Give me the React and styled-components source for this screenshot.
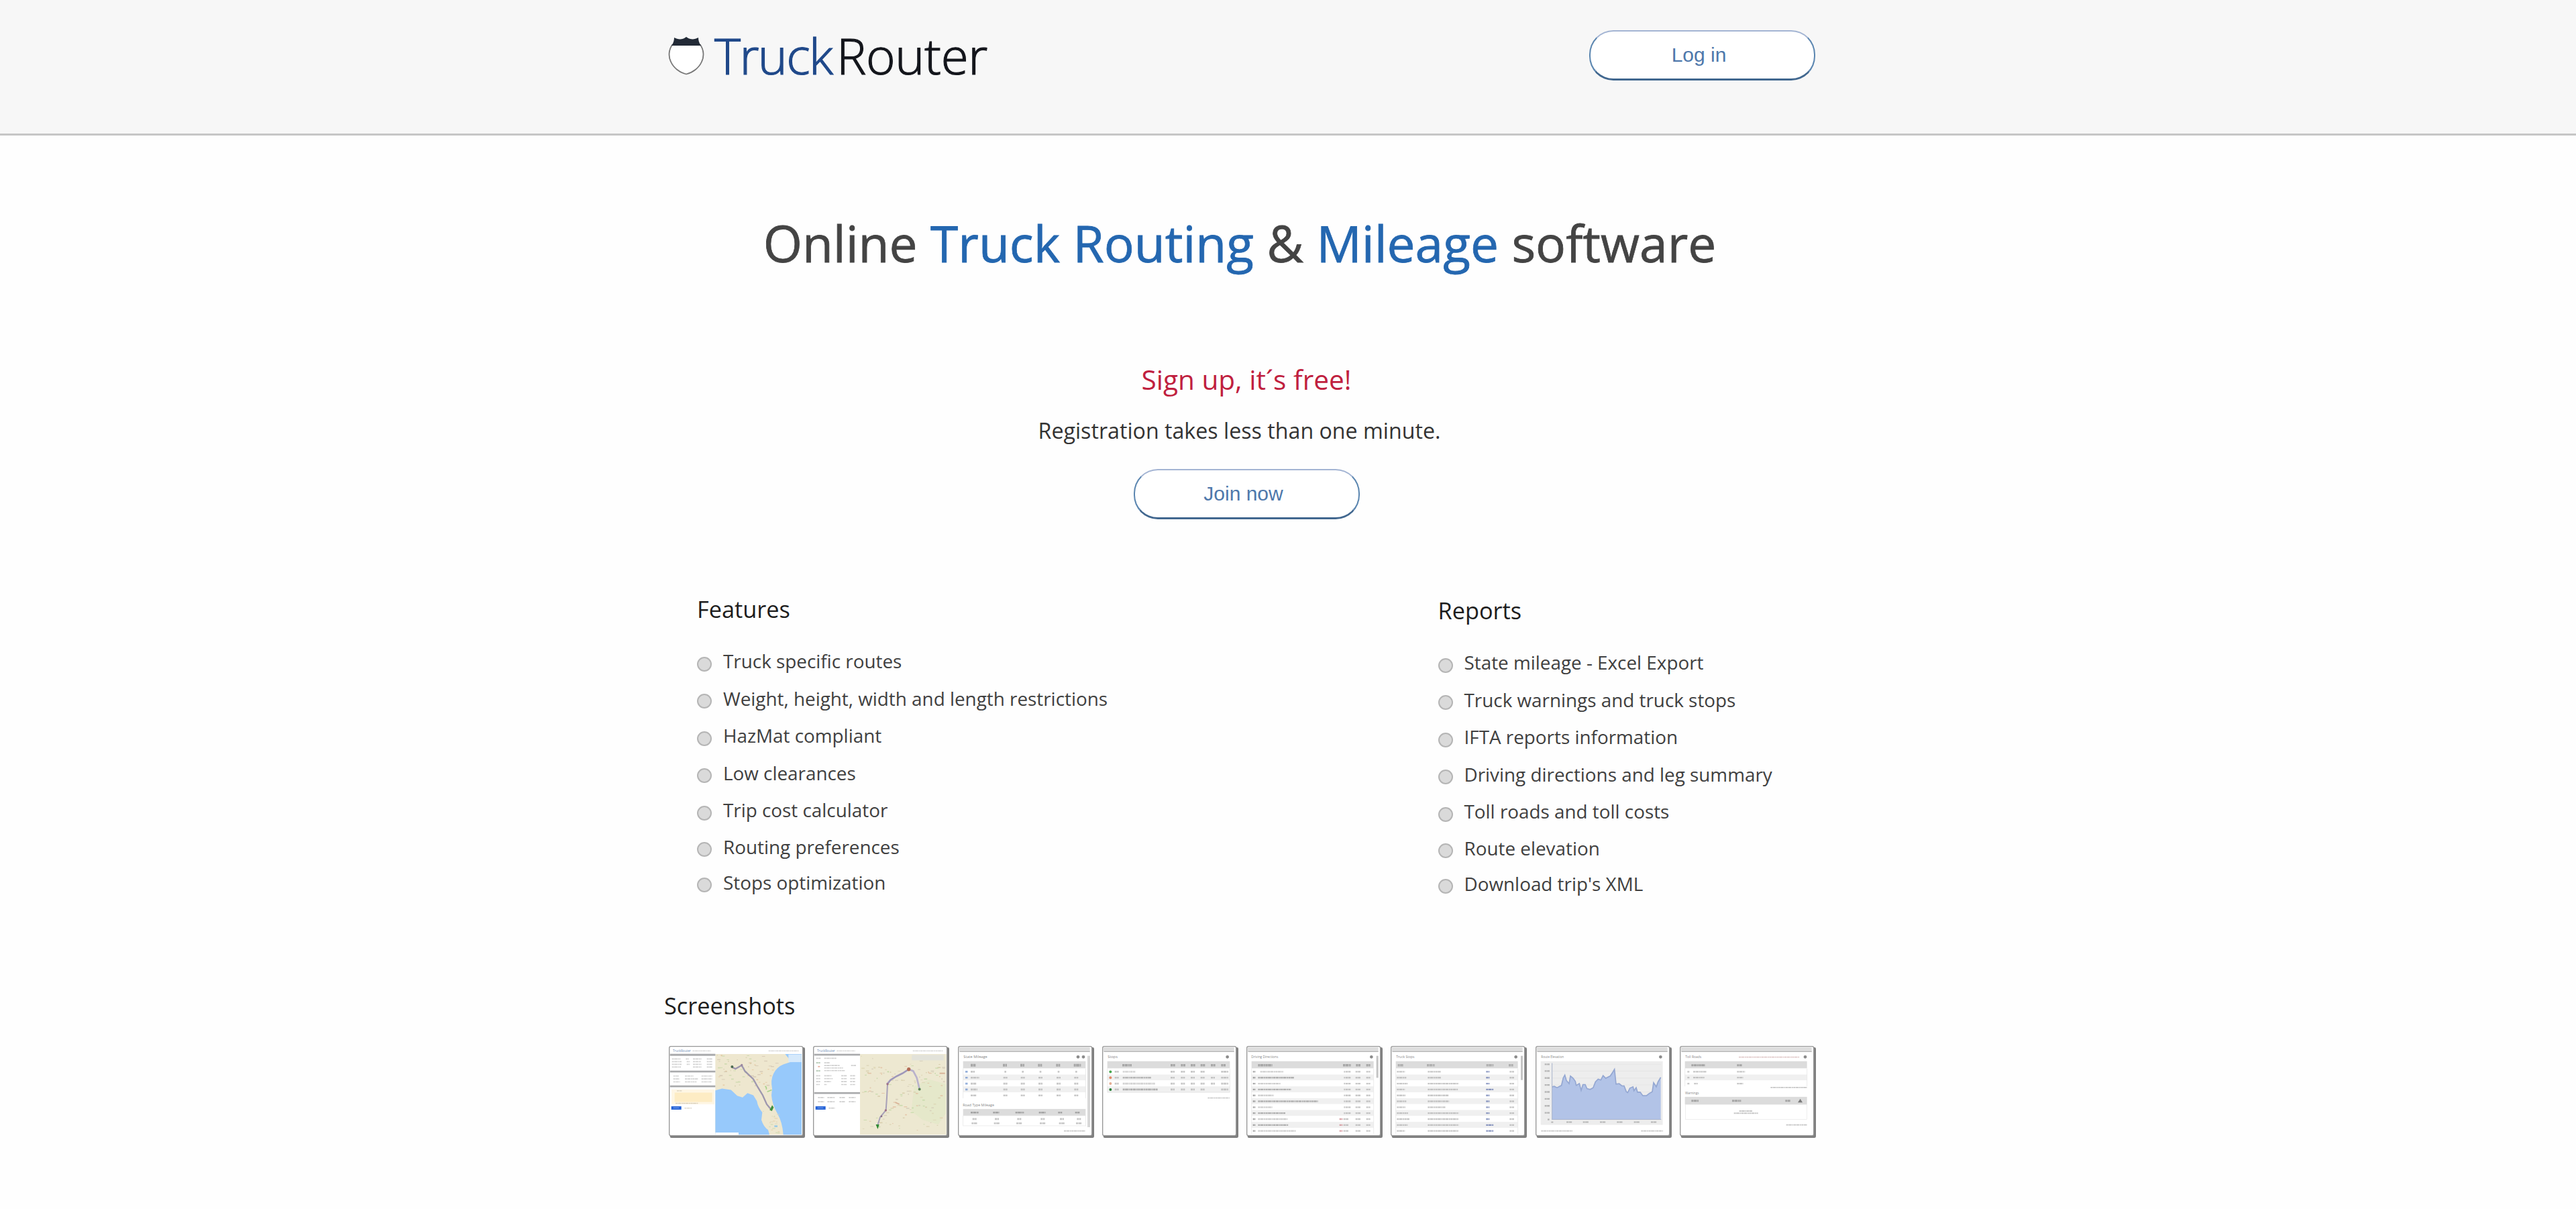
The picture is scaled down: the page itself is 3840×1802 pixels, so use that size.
import React from "react";
import styled, { createGlobalStyle } from "styled-components";

const Global = createGlobalStyle`
  html, body { margin: 0; padding: 0; background: #fefefe; }
  body { font-family: "Open Sans", "Noto Sans", sans-serif; color: #333; overflow-x: hidden; }
  *, *::before { box-sizing: border-box; }
`;

const Page = styled.div`
  min-height: 1802px;
  background: #fefefe;
`;

const Header = styled.header`
  height: 202px;
  background: #f7f7f7;
  border-bottom: 3px solid #c6c6c6;
  padding: 45px 1134px 0 996px;
  display: flex;
  justify-content: space-between;
  align-items: flex-start;
`;

const Brand = styled.a`
  display: flex;
  align-items: flex-start;
  gap: 15px;
`;

const Shield = styled.svg`
  width: 54px;
  height: 58px;
  margin-top: 9px;
`;

const BrandName = styled.span`
  font-family: "Open Sans", sans-serif;
  font-weight: 300;
  font-size: 74.5px;
  font-kerning: none;
  line-height: 80px;
  margin-top: -3px;
  white-space: nowrap;
  color: #14161c;
  -webkit-text-stroke: 1.2px currentColor;
  letter-spacing: -0.3px;
`;

const BrandAccent = styled.span`
  color: #20498a;
  margin-right: 6.5px;
  letter-spacing: -1.6px;
`;

const PillButton = styled.button`
  width: 337px;
  height: 75px;
  margin: 0;
  padding: 0 10px 0 0;
  border: 2px solid #5b86b0;
  border-top-color: #a3b4d3;
  border-bottom: 3px solid #41678f;
  border-radius: 36px;
  background: #fff;
  color: #4e78ab;
  font-family: "Liberation Sans", Arial, sans-serif;
  font-size: 30px;
  line-height: 34px;
`;

const Main = styled.main`
  width: 1716px;
  margin-left: 991px;
  display: flex;
  flex-direction: column;
`;

const Hero = styled.section`
  padding-top: 110px;
  display: flex;
  flex-direction: column;
  align-items: center;
`;

const Title = styled.h1`
  margin: 0 0 124px;
  padding-right: 2px;
  font-weight: 400;
  font-size: 74.9px;
  line-height: 100px;
  color: #444;
  white-space: nowrap;
  -webkit-text-stroke: 0.8px currentColor;
`;

const Accent = styled.span`
  color: #2467b0;
`;

const SignUp = styled.h2`
  margin: 0 0 21px;
  padding-left: 18px;
  font-weight: 400;
  font-size: 40.6px;
  line-height: 60px;
  color: #c01f3f;
`;

const Note = styled.p`
  margin: 0 0 32px;
  padding-right: 3px;
  font-size: 32.2px;
  line-height: 50px;
  color: #333;
`;

const JoinSlot = styled.div`
  padding-left: 19px;
  display: flex;
`;

const Columns = styled.section`
  margin-top: 109px;
  height: 480px;
  padding-left: 48px;
  display: grid;
  grid-template-columns: 1104.5px 1fr;
`;

const Column = styled.div`
  padding-top: ${(p) => p.$drop || 0}px;
`;

const Heading = styled.h3`
  margin: 0;
  font-weight: 400;
  font-size: 34.3px;
  line-height: 50px;
  color: #1d1d1d;
`;

const List = styled.ul`
  list-style: none;
  margin: 26px 0 0;
  padding: 0;
  display: grid;
  grid-template-rows: 55.6px 55.6px 55.6px 55.5px 54.4px 53px 53px;
`;

const Item = styled.li`
  display: flex;
  align-items: flex-start;
  gap: 17px;
  font-size: 27.85px;
  line-height: 53px;
  color: #404040;
  white-space: nowrap;

  &::before {
    content: "";
    flex: none;
    width: 22px;
    height: 22px;
    margin: 19.5px 0 0 0;
    border: 2px solid #b5b5b5;
    border-radius: 50%;
    background: #dadada;
  }
`;

const Gallery = styled.section`
  margin: 111px 0 0 -1px;
`;

const Strip = styled.div`
  margin: 35px 0 0 7px;
  display: flex;
  gap: 12.3px;
`;

const Frame = styled.svg`
  display: block;
  flex: none;
  width: 203px;
  height: 137px;
`;

const TinyText = styled.text`
  font-family: "Open Sans", sans-serif;
  font-size: ${(p) => p.$size || 17}px;
  fill: ${(p) => p.$fill || "#888"};
`;

/* A thumbnail drawn on a 609 x 410 canvas. */
function Thumb({ children, dialog }) {
  return (
    <Frame viewBox="0 0 609 410" preserveAspectRatio="none">
      <rect x="5" y="6" width="604" height="404" rx="7" fill="#7f7f7f" />
      <rect x="2" y="2" width="597" height="398" rx="7" fill="#fff" stroke="#979797" strokeWidth="4" />
      {dialog && <path d="M6 6H590V26H6Z" fill="#dedede" />}
      {dialog && <path d="M8 25H590" stroke="#b4b4b4" strokeWidth="4" />}
      {children}
    </Frame>
  );
}

/* Runs of unreadably small copy: [x, y, width, colour] */
function Lines({ data, h = 6, fill = "#aaa", opacity = 0.65 }) {
  return (
    <g opacity={opacity}>
      {data.map(([x, y, w, c], i) => (
        <path
          key={i}
          d={`M${x} ${y}h${w}`}
          stroke={c || fill}
          strokeWidth={h}
          strokeDasharray="9 1.5 14 2 6 1.5"
        />
      ))}
    </g>
  );
}

function Rows({ x, y, w, n, step = 26.4 }) {
  return (
    <g>
      {Array.from({ length: n }, (_, i) => (
        <rect key={i} x={x} y={y + i * step} width={w} height={step} fill={i % 2 ? "#f0f0f0" : "#fff"} />
      ))}
      <path d={`M${x} ${y}V${y + n * step}M${x + w} ${y}V${y + n * step}`} stroke="#e2e2e2" strokeWidth="2" />
    </g>
  );
}

function AppTop() {
  return (
    <g>
      <TinyText x="18" y="26" $size={14} $fill="#6f8cb6">TruckRouter</TinyText>
      <Lines data={[[106, 22, 82], [446, 22, 136]]} h={4} fill="#bbb" />
    </g>
  );
}

const speckle = (x, y, w, h, n, colors) =>
  Array.from({ length: n }, (_, i) => {
    const px = x + ((i * 137.5) % w);
    const py = y + ((i * 83.3 + i * i * 7.1) % h);
    return (
      <rect key={i} x={px} y={py} width={5 + (i % 4) * 3} height={3 + (i % 3)} fill={colors[i % colors.length]} opacity="0.7" />
    );
  });

function CoastMap() {
  return (
    <Thumb>
      <AppTop />
      <rect x="208" y="36" width="386" height="360" fill="#eee7cf" />
      {speckle(214, 40, 270, 140, 70, ["#cfc9a6", "#e2c298", "#c2d6a4", "#cfc1ae"])}
      <path d="M594 36H520L548 70L512 82Q482 94 468 124Q454 152 462 190L459 220Q462 262 486 302Q508 340 512 396H594Z" fill="#97c9fb" />
      <path d="M208 198L238 190L278 196L306 222L330 230L352 210L378 220L394 246Q398 272 418 296L414 330Q424 362 444 374L450 396H208Z" fill="#97c9fb" />
      {speckle(420, 290, 70, 100, 18, ["#d8d3b4", "#e6cda6", "#cfdcb4"])}
      <rect x="535" y="38" width="58" height="34" fill="#d6e9fb" />
      <path d="M208 386H312V398H208Z" fill="#fff" />
      <path d="M283 94L298 102L326 86L340 112L378 148L398 184L420 220L438 260L458 284" fill="none" stroke="#8f88a8" strokeWidth="7" opacity=".85" />
      <circle cx="283" cy="93" r="6" fill="#4b6a4f" />
      <circle cx="326" cy="85" r="5" fill="#9a87a0" />
      <path d="M462 264l7 10-8 16-10-4z" fill="#3f9141" />
      <path d="M430 180q8 2 6 14M440 204l20-8" stroke="#a9d18b" strokeWidth="5" fill="none" />
      <rect x="472" y="354" width="14" height="8" fill="#9ccbe4" />
      <rect x="5" y="35" width="203" height="9" fill="#a9aaac" />
      <rect x="5" y="110" width="203" height="8" fill="#a9aaac" />
      <rect x="5" y="176" width="203" height="8" fill="#a9aaac" />
      <Lines
        data={[
          [14, 58, 38], [76, 58, 14], [108, 58, 38], [170, 58, 24], [14, 70, 44], [80, 70, 14], [108, 70, 36], [170, 70, 24],
          [14, 82, 44], [80, 82, 14], [108, 82, 38], [170, 82, 24], [14, 94, 40], [108, 94, 38], [170, 94, 24],
          [20, 134, 26], [72, 134, 38], [146, 134, 48], [20, 147, 28], [72, 147, 58], [146, 147, 48], [20, 160, 30], [72, 160, 52], [146, 160, 46],
        ]}
        h={5}
        fill="#bcbcbc"
        opacity={0.65}
      />
      <rect x="12" y="194" width="192" height="66" fill="#fef6e4" />
      <path d="M26 208H194V250H26Z" fill="#fdecc4" />
      <Lines data={[[36, 200, 22], [30, 256, 100], [70, 277, 34]]} h={4} fill="#c4bba8" />
      <rect x="11" y="269" width="45" height="15" fill="#2462d6" />
      <rect x="20" y="274" width="26" height="4" fill="#6b97ea" />
    </Thumb>
  );
}

function InlandMap() {
  return (
    <Thumb>
      <AppTop />
      <rect x="210" y="36" width="386" height="360" fill="#ede8d1" />
      <path d="M452 180L520 150L594 170V300L560 350L490 330L440 290Z" fill="#dfe7c4" opacity=".6" />
      {speckle(214, 44, 370, 340, 130, ["#dcd3b0", "#dfb898", "#bcd6a0", "#cfc4b2", "#d0c4a0"])}
      <rect x="442" y="40" width="142" height="24" fill="#dfe0dc" opacity=".8" />
      <path d="M330 170L346 152L372 136L400 122L428 104L448 112L464 142L476 192" fill="none" stroke="#b9b2cc" strokeWidth="8" />
      <path d="M428 104L400 122L372 136L346 152L333 170L330 230L326 286L300 318L288 356" fill="none" stroke="#968fb2" strokeWidth="6" opacity=".8" />
      <circle cx="428" cy="104" r="8" fill="#b26b55" />
      <circle cx="333" cy="170" r="5" fill="#a06f84" />
      <circle cx="325" cy="287" r="5" fill="#a06f84" />
      <circle cx="306" cy="314" r="4" fill="#8a6f84" />
      <circle cx="476" cy="193" r="6" fill="#5c8257" />
      <path d="M283 352h11l-5 15z" fill="#2f8a34" stroke="#2f8a34" strokeWidth="3" />
      <path d="M368 252l18 8M566 122h24" stroke="#d1a083" strokeWidth="6" opacity=".7" />
      <rect x="5" y="35" width="205" height="8" fill="#a9aaac" />
      <rect x="5" y="206" width="205" height="8" fill="#a9aaac" />
      <Lines
        data={[
          [14, 55, 20], [50, 55, 54], [14, 75, 18, "#8fae90"], [50, 75, 24], [50, 87, 70], [170, 87, 22], [22, 92, 10, "#dd8a72"],
          [50, 98, 84], [50, 110, 92], [14, 111, 18, "#8fae90"], [14, 133, 18], [50, 133, 32], [126, 133, 26], [166, 133, 22],
          [14, 146, 18], [50, 146, 38], [126, 146, 26], [166, 146, 22], [14, 159, 18], [50, 159, 30], [126, 159, 26], [166, 159, 22], [14, 172, 16], [50, 172, 12], [126, 172, 26], [166, 172, 22],
          [22, 230, 28], [64, 230, 34], [118, 230, 26], [160, 230, 30], [22, 249, 28], [64, 249, 34], [118, 249, 26], [160, 249, 30], [70, 277, 28],
        ]}
        h={5}
        fill="#bcbcbc"
        opacity={0.7}
      />
      <rect x="11" y="269" width="45" height="15" fill="#2462d6" />
      <rect x="20" y="274" width="26" height="4" fill="#6b97ea" />
    </Thumb>
  );
}

function StateMileage() {
  const cols = [203, 281, 360, 441, 520];
  return (
    <Thumb dialog>
      <TinyText x="25" y="55">State Mileage</TinyText>
      <circle cx="537" cy="49" r="7" fill="#8b8b8b" />
      <circle cx="561" cy="49" r="7" fill="#8b8b8b" />
      <rect x="23" y="68" width="548" height="32" fill="#dcdcdc" />
      <Rows x={23} y={101} w={548} n={5} />
      <Lines data={[[57, 86, 22], ...cols.map((x) => [x - 2, 86, x > 500 ? 32 : 18])]} h={12} fill="#8c8c8c" />
      <Lines
        h={8}
        data={[0, 1, 2, 3, 4].flatMap((r) => [
          [57, 115 + r * 26.4, [18, 38, 26, 30, 26][r]],
          ...cols.map((x) => [r ? x : x + 5, 115 + r * 26.4, r ? 18 : 8]),
          ...(r < 4 ? [[33, 115 + r * 26.4, 12, "#5d86c9"]] : []),
        ])}
      />
      <TinyText x="22" y="269" $size={16}>Road Type Mileage</TinyText>
      <rect x="23" y="281" width="548" height="30" fill="#dcdcdc" />
      <rect x="23" y="311" width="548" height="45" fill="none" stroke="#e4e4e4" strokeWidth="2" />
      <Lines
        h={8}
        data={[57, 157, 257, 362, 448, 524].flatMap((x, i) => [
          [x, 297, [36, 28, 38, 30, 18, 20][i], "#858585"],
          [x + 8, 326, 18],
          [x + 4, 345, 26],
        ])}
      />
      <rect x="579" y="44" width="12" height="318" fill="#d8d8d8" />
      <Lines data={[[474, 379, 96]]} h={5} />
    </Thumb>
  );
}

function Stops() {
  const cols = [306, 352, 396, 440, 486, 532];
  return (
    <Thumb dialog>
      <TinyText x="25" y="55">Stops</TinyText>
      <circle cx="560" cy="49" r="7" fill="#8b8b8b" />
      <rect x="23" y="68" width="548" height="32" fill="#dcdcdc" />
      <Rows x={23} y={101} w={548} n={4} />
      <path d="M23 207H571" stroke="#ddd" strokeWidth="2" />
      <Lines data={[[90, 86, 42], ...cols.map((x) => [x, 86, 20])]} h={11} fill="#8c8c8c" />
      <Lines
        h={8}
        data={[0, 1, 2, 3].flatMap((r) => [
          [56, 115 + r * 26.4, 18],
          [92, 115 + r * 26.4, [56, 128, 144, 156][r], ["#c4c4c4", "#989898", "#bbb", "#8c8c8c"][r]],
          ...cols.filter((_, i) => i !== 4 || r === 1 || r === 2).map((x) => [x, 115 + r * 26.4, x > 520 ? 32 : 18]),
        ])}
      />
      {["#45a54b", "#e08a68", "#e4ac91", "#267d36"].map((c, i) => (
        <circle key={c} cx="37" cy={115 + i * 26.4} r="6" fill={c} />
      ))}
      <Lines data={[[472, 232, 98]]} h={5} />
    </Thumb>
  );
}

function Directions() {
  const widths = [104, 162, 100, 148, 70, 268, 64, 122, 132, 136, 170];
  return (
    <Thumb dialog>
      <TinyText x="22" y="55" $size={14.5}>Driving Directions</TinyText>
      <circle cx="559" cy="49" r="7" fill="#8b8b8b" />
      <rect x="23" y="68" width="546" height="32" fill="#dcdcdc" />
      <Rows x={23} y={101} w={546} n={11} />
      <Lines data={[[52, 86, 64], [432, 86, 36], [490, 86, 20], [536, 86, 18]]} h={11} fill="#8c8c8c" />
      <Lines
        h={7}
        data={widths.flatMap((w, r) => [
          [29, 115 + r * 26.4, 12, "#7b7b7b"],
          [r ? 52 : 62, 115 + r * 26.4, w, r % 2 ? "#8e8e8e" : "#b5b5b5"],
          [r > 7 ? 416 : 436, 115 + r * 26.4, r > 7 ? 14 : 6, r > 7 ? "#c9747c" : "#aaa"],
          [r > 7 ? 434 : 444, 115 + r * 26.4, 22],
          [488, 115 + r * 26.4, 22],
          [536, 115 + r * 26.4, 18],
        ])}
      />
      <rect x="581" y="44" width="9" height="98" fill="#c4c4c4" />
    </Thumb>
  );
}

function TruckStops() {
  const places = [58, 60, 138, 136, 94, 96, 80, 138, 138, 138, 138];
  const names = [36, 42, 48, 36, 38, 42, 38, 50, 56, 48, 36];
  return (
    <Thumb dialog>
      <TinyText x="25" y="55" $size={15}>Truck Stops</TinyText>
      <circle cx="560" cy="49" r="7" fill="#8b8b8b" />
      <rect x="23" y="68" width="546" height="32" fill="#dcdcdc" />
      <Rows x={23} y={101} w={546} n={11} />
      <Lines data={[[32, 86, 24], [162, 86, 36], [428, 86, 32], [528, 86, 20]]} h={11} fill="#999" />
      <Lines
        h={7}
        data={places.flatMap((w, r) => [
          [28, 115 + r * 26.4, names[r]],
          [166, 115 + r * 26.4, w],
          [427, 115 + r * 26.4, [3, 9, 10].includes(r) ? 34 : 15, "#5064a4"],
          [532, 115 + r * 26.4, 20],
        ])}
      />
      <rect x="582" y="44" width="9" height="108" fill="#c4c4c4" />
    </Thumb>
  );
}

function Elevation() {
  const ridge =
    "74,182 84,180 96,186 116,176 124,142 131,130 138,154 150,168 156,134 168,144 178,158 182,176 196,168 204,198 212,172 222,172 230,190 244,194 258,186 268,160 280,148 292,152 302,132 314,144 334,134 346,116 353,104 360,170 374,168 386,178 396,178 406,204 412,208 422,188 436,182 440,200 450,186 456,206 468,206 480,222 496,222 508,212 522,204 528,164 540,182 548,160 560,140";
  return (
    <Thumb dialog>
      <TinyText x="25" y="55" $size={14}>Route Elevation</TinyText>
      <circle cx="559" cy="49" r="7" fill="#8b8b8b" />
      <rect x="23" y="68" width="546" height="284" fill="#ededed" />
      {[82, 112, 143, 174, 205, 236, 267, 298].map((y) => (
        <path key={y} d={`M74 ${y}H560`} stroke="#e2e2e2" strokeWidth="2" />
      ))}
      <polygon points={`74,328 ${ridge} 560,328`} fill="#b2c3e7" />
      <polyline points={ridge} fill="none" stroke="#94a7d2" strokeWidth="5" />
      <path d="M74 76V328H562" fill="none" stroke="#aab4cc" strokeWidth="3" />
      <Lines h={7} data={[82, 112, 143, 174, 205, 236, 267, 298, 328].map((y) => [y === 328 ? 54 : 41, y, y === 328 ? 8 : 22])} fill="#999" />
      <Lines h={6} data={[70, 138, 212, 288, 364, 440, 516].map((x) => [x, 340, x === 70 ? 10 : 26])} fill="#999" />
      <Lines h={5} data={[[25, 379, 140], [472, 379, 98]]} />
    </Thumb>
  );
}

function TollRoads() {
  return (
    <Thumb dialog>
      <TinyText x="25" y="55" $size={15}>Toll Roads</TinyText>
      <circle cx="561" cy="49" r="7" fill="#8b8b8b" />
      <Lines h={5} data={[[264, 50, 272, "#d4b0b0"]]} />
      <rect x="23" y="68" width="546" height="32" fill="#dcdcdc" />
      <Rows x={23} y={101} w={546} n={3} />
      <Lines h={9} data={[[52, 86, 62], [256, 86, 22]]} fill="#888" />
      <Lines
        h={7}
        data={[[34, 115, 10], [60, 115, 60], [256, 115, 36], [34, 141, 10], [60, 141, 50], [256, 141, 28], [34, 168, 10], [64, 168, 16], [256, 168, 28]]}
      />
      <Lines h={5} data={[[406, 185, 164], [476, 352, 94]]} />
      <TinyText x="24" y="217" $size={14}>Warnings</TinyText>
      <rect x="23" y="227" width="546" height="34" fill="#dcdcdc" />
      <rect x="25" y="261" width="543" height="67" fill="#fff" stroke="#e8e8e8" strokeWidth="2" />
      <Lines h={9} data={[[52, 245, 32], [234, 245, 40], [472, 245, 22]]} fill="#888" />
      <path d="M528 252L539 236L549 252Z" fill="#7a7a7a" />
      <Lines h={6} data={[[266, 290, 58], [242, 300, 108]]} />
    </Thumb>
  );
}

const features = [
  "Truck specific routes",
  "Weight, height, width and length restrictions",
  "HazMat compliant",
  "Low clearances",
  "Trip cost calculator",
  "Routing preferences",
  "Stops optimization",
];

const reports = [
  "State mileage - Excel Export",
  "Truck warnings and truck stops",
  "IFTA reports information",
  "Driving directions and leg summary",
  "Toll roads and toll costs",
  "Route elevation",
  "Download trip's XML",
];

function ListColumn({ title, items, drop }) {
  return (
    <Column $drop={drop}>
      <Heading>{title}</Heading>
      <List>
        {items.map((t) => (
          <Item key={t}>{t}</Item>
        ))}
      </List>
    </Column>
  );
}

export default function App() {
  return (
    <Page>
      <Global />
      <Header>
        <Brand>
          <Shield viewBox="0 0 54 58">
            <path
              d="M6 13C1 20 0 30 4 38C8 47 17 54 27 56.5C37 54 46 47 50 38C54 30 53 20 48 13Z"
              fill="#fff"
              stroke="#777"
              strokeWidth="1.8"
            />
            <path
              d="M5 14C8 10 9 6 9 2C14 5 20 5 24 3L27 1L30 3C34 5 40 5 45 2C45 6 46 10 49 14Z"
              fill="#222a36"
            />
          </Shield>
          <BrandName>
            <BrandAccent>Truck</BrandAccent>Router
          </BrandName>
        </Brand>
        <PillButton>Log in</PillButton>
      </Header>
      <Main>
        <Hero>
          <Title>
            Online <Accent>Truck Routing</Accent> &amp; <Accent>Mileage</Accent> software
          </Title>
          <SignUp>Sign up, it´s free!</SignUp>
          <Note>Registration takes less than one minute.</Note>
          <JoinSlot>
            <PillButton>Join now</PillButton>
          </JoinSlot>
        </Hero>
        <Columns>
          <ListColumn title="Features" items={features} />
          <ListColumn title="Reports" items={reports} drop={2} />
        </Columns>
        <Gallery>
          <Heading>Screenshots</Heading>
          <Strip>
            <CoastMap />
            <InlandMap />
            <StateMileage />
            <Stops />
            <Directions />
            <TruckStops />
            <Elevation />
            <TollRoads />
          </Strip>
        </Gallery>
      </Main>
    </Page>
  );
}
